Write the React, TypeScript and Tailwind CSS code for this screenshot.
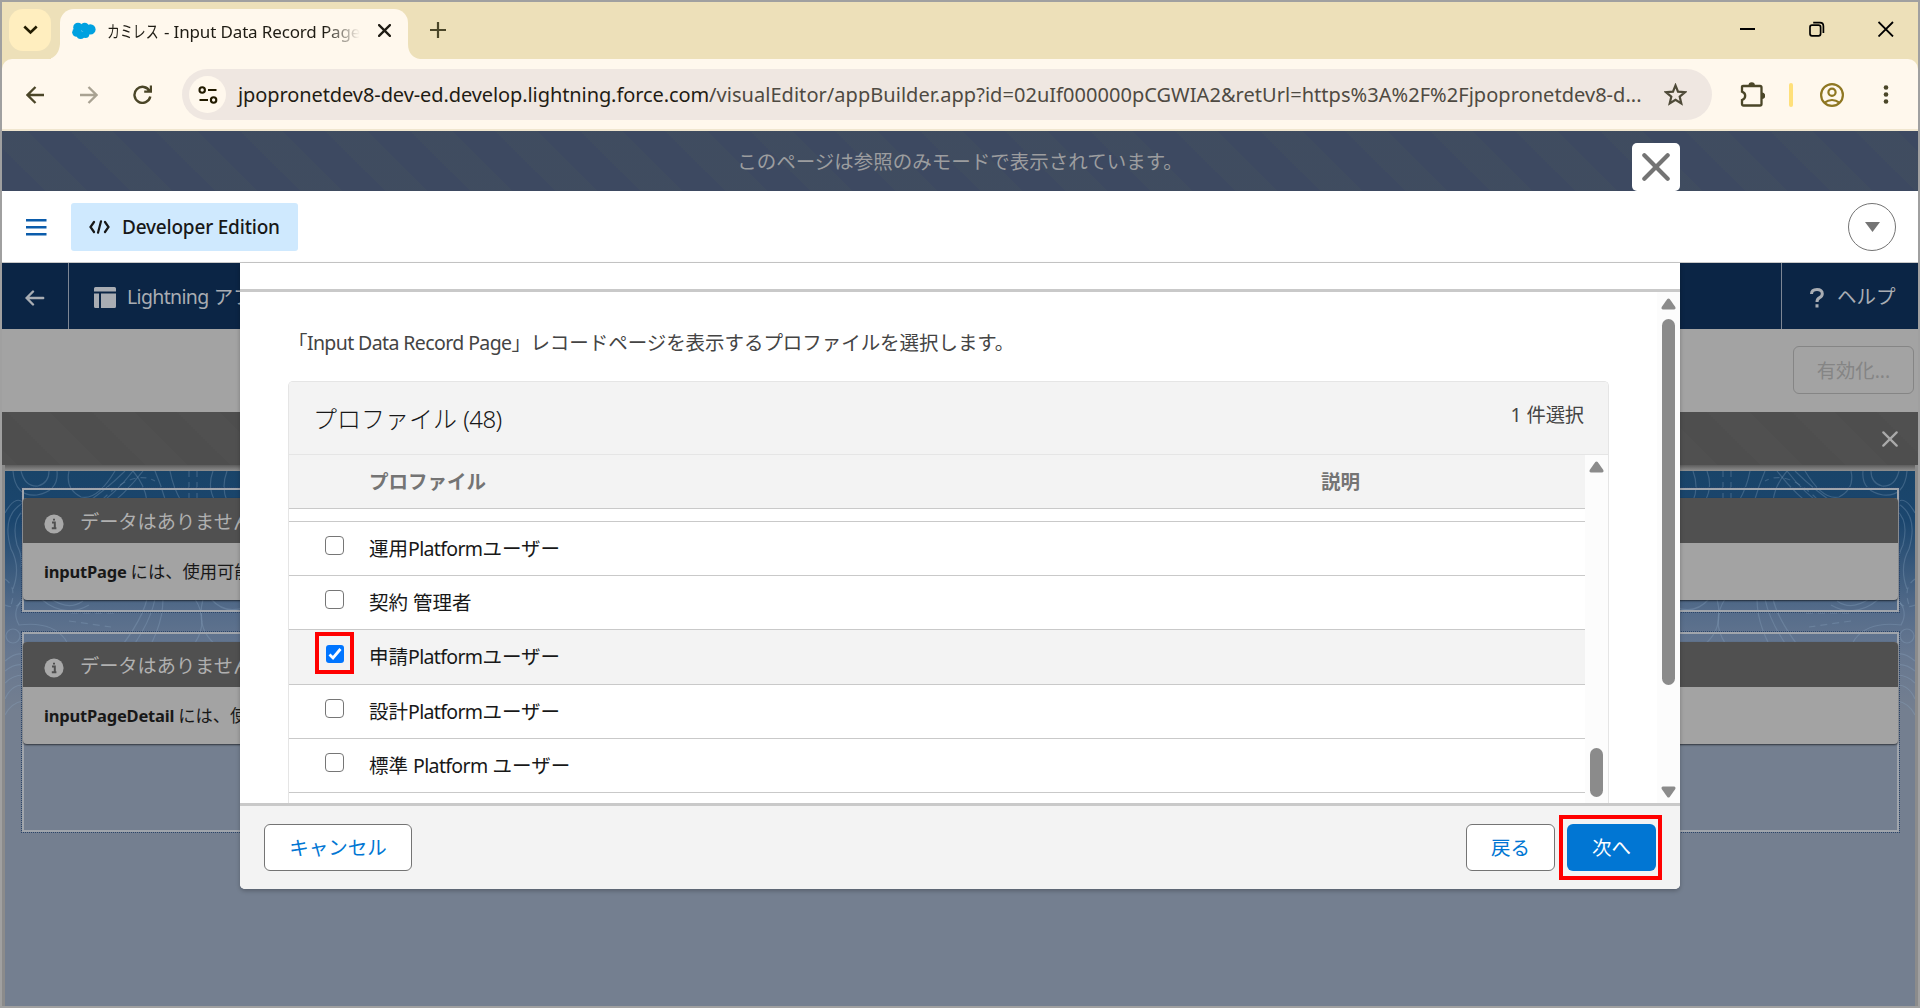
import { useState } from 'react';

interface Profile {
  id: string;
  name: string;
}

const PROFILES: Profile[] = [
  { id: 'operation', name: '運用Platformユーザー' },
  { id: 'contract', name: '契約 管理者' },
  { id: 'request', name: '申請Platformユーザー' },
  { id: 'design', name: '設計Platformユーザー' },
  { id: 'standard', name: '標準 Platform ユーザー' },
];

// Latin runs sit a little tighter than the Japanese around them
function MixedText({ text }: { text: string }) {
  return (
    <>
      {text.split(/([A-Za-z]+)/).map((part, index) =>
        /[A-Za-z]/.test(part) ? (
          <span key={index} className="tracking-[-0.65px]">
            {part}
          </span>
        ) : (
          part
        )
      )}
    </>
  );
}

function CloseGlyph({ className, width }: { className: string; width: number }) {
  return (
    <svg className={className} viewBox="0 0 24 24" fill="none" stroke="currentColor" strokeWidth={width} strokeLinecap="round">
      <path d="M2 2 22 22M22 2 2 22" />
    </svg>
  );
}

function TabStrip() {
  return (
    <div className="flex h-[57px] bg-[#ede0b9] pl-[7px]">
      <button className="mt-[7px] flex h-[42px] w-[42px] items-center justify-center rounded-[14px] bg-[#ffeebf]">
        <svg className="h-[10px] w-[15px]" viewBox="0 0 15 10" fill="none" stroke="#221b00" strokeWidth="2.6">
          <path d="M1.3 1.5 7.5 7.5 13.7 1.5" />
        </svg>
      </button>
      <svg className="mt-[42px] h-[15px] w-[9px] shrink-0" viewBox="0 0 9 15" fill="#fff8ed">
        <path d="M9 0V15H-5C3 15 8 10 9 0Z" />
      </svg>
      <div className="mt-[7px] flex h-[50px] w-[348px] items-center rounded-t-[14px] bg-[#fff8ed] pl-[12px] pb-[7px]">
        <svg className="h-[18px] w-[24px]" viewBox="0 0 24 18" fill="#00a1e0">
          <circle cx="6" cy="5.5" r="4.8" />
          <circle cx="12.7" cy="5.2" r="4.4" />
          <circle cx="18.4" cy="7.4" r="5.2" />
          <circle cx="4.6" cy="10.3" r="4.4" />
          <circle cx="8.6" cy="13" r="4" />
          <circle cx="13.5" cy="12.3" r="3.8" />
        </svg>
        <div className="ml-[11px] flex h-[30px] w-[253px] items-center overflow-hidden whitespace-nowrap pt-[2px] text-[17px] text-[#1f1c14] [mask-image:linear-gradient(90deg,#000_86%,transparent)]">
          <span className="w-[57px] origin-left scale-x-[0.76]">カミレス</span>
          <span className="tracking-[-0.15px]">- Input Data Record Page</span>
        </div>
        <CloseGlyph className="ml-[18px] h-[13px] w-[13px] text-[#1f1c14]" width={4.2} />
      </div>
      <svg className="mt-[42px] h-[15px] w-[12px] shrink-0" viewBox="0 0 12 15" fill="#fff8ed">
        <path d="M0 0V15H12C5 14 0 9 0 0Z" />
      </svg>
      <svg className="ml-[10px] mt-[20px] h-[16px] w-[16px]" viewBox="0 0 16 16" stroke="#4b4628" strokeWidth="2.2">
        <path d="M8 0V16M0 8H16" />
      </svg>
      <div className="mr-[24px] mt-[19px] ml-auto flex gap-[53px]">
        <svg className="h-[16px] w-[16px]" viewBox="0 0 16 16" stroke="#000" strokeWidth="2">
          <path d="M0 8H15" />
        </svg>
        <svg className="h-[16px] w-[16px]" viewBox="0 0 16 16" fill="none" stroke="#000" strokeWidth="1.7">
          <rect x="1" y="4.2" width="10.6" height="10.6" rx="2" />
          <path d="M4.2 1.7H11Q14.4 1.7 14.4 5.3V12" />
        </svg>
        <svg className="h-[16px] w-[16px]" viewBox="0 0 16 16" stroke="#000" strokeWidth="1.8">
          <path d="M0.5 1 15 15.5M15 1 0.5 15.5" />
        </svg>
      </div>
    </div>
  );
}

function AddressBar() {
  return (
    <div className="bg-[#ede0b9]">
      <div className="flex h-[72px] items-start rounded-t-[10px] border-b-2 border-[#f0e6cf] bg-[#fff8ed] pt-[10px]">
        <div className="flex h-[51px] w-[180px] items-center pl-[24px] text-[#4b4628]">
          <svg className="h-[18px] w-[18px]" viewBox="0 0 18 18" fill="none" stroke="currentColor" strokeWidth="2.3">
            <path d="M18 9H1.8M9.5 1 1.5 9 9.5 17" />
          </svg>
          <svg className="ml-[36px] h-[18px] w-[18px]" viewBox="0 0 18 18" fill="none" stroke="#a9a292" strokeWidth="2.3">
            <path d="M0 9H16.2M8.5 1 16.5 9 8.5 17" />
          </svg>
          <svg className="ml-[35px] h-[19px] w-[19px]" viewBox="0 0 19 19" fill="none" stroke="currentColor" strokeWidth="2.4">
            <path d="M16.6 6.2A8 8 0 1 0 17.3 11.5M18 0.5V6.6H11.2" />
          </svg>
        </div>
        <div className="flex h-[51px] w-[1530px] items-center rounded-full bg-[#efe7e1] pl-[7px]">
          <div className="flex h-[37px] w-[37px] items-center justify-center rounded-full bg-[#fff8ed]">
            <svg className="h-[18px] w-[20px]" viewBox="0 0 20 18" fill="none" stroke="#221b00" strokeWidth="2.1">
              <circle cx="4.2" cy="4" r="2.7" />
              <path d="M10 4H18.5M1.5 14H10" />
              <circle cx="15.6" cy="14" r="2.7" />
            </svg>
          </div>
          <div className="ml-[12px] w-[1410px] whitespace-nowrap text-[20px] text-[#1f1c14]">
            <span className="tracking-[-0.09px]">jpopronetdev8-dev-ed.develop.lightning.force.com</span>
            <span className="tracking-[0.04px] text-[#4e4a42]">
              /visualEditor/appBuilder.app?id=02uIf000000pCGWIA2&amp;retUrl=https%3A%2F%2Fjpopronetdev8-d...
            </span>
          </div>
          <svg className="ml-[16px] h-[23px] w-[23px]" viewBox="0 0 23 23" fill="none" stroke="#4e4a38" strokeWidth="2.2">
            <path d="M11.5 2.4 14 8.6 21 9.2 15.7 13.7 17.3 20.5 11.5 16.9 5.7 20.5 7.3 13.7 2 9.2 9 8.6Z" />
          </svg>
        </div>
        <div className="flex h-[51px] flex-1 items-center">
          <svg className="ml-[28px] h-[25px] w-[25px]" viewBox="0 0 25 25" fill="none" stroke="#4b4628" strokeWidth="2.3">
            <path d="M2 4.5Q2 4 3 4H20Q21.5 4 21.5 5.5V22Q21.5 23.5 20 23.5H3.5Q2 23.5 2 22V18Q5.2 16.8 5.2 13.8Q5.2 10.8 2 9.6Z" />
            <path d="M8.5 3.5A3.2 3.2 0 0 1 14.9 3.5ZM22 10.6A3.2 3.2 0 0 1 22 17Z" fill="#4b4628" strokeWidth="0" />
          </svg>
          <div className="ml-[24px] h-[24px] w-[4px] rounded-full bg-[#ffe07a]" />
          <svg className="ml-[27px] h-[24px] w-[24px]" viewBox="0 0 24 24" fill="none" stroke="#8f7722" strokeWidth="2.2">
            <circle cx="12" cy="12" r="10.9" />
            <circle cx="12" cy="9.3" r="3.6" />
            <path d="M4.2 19.8Q12 14.2 19.8 19.8" />
          </svg>
          <svg className="ml-[39px] h-[19px] w-[6px]" viewBox="0 0 6 19" fill="#4b4628">
            <circle cx="3" cy="2.5" r="2.3" />
            <circle cx="3" cy="9.5" r="2.3" />
            <circle cx="3" cy="16.5" r="2.3" />
          </svg>
        </div>
      </div>
    </div>
  );
}

function EditionBar() {
  return (
    <div className="flex h-[72px] items-center border-b border-[#c9c9c9] bg-white pl-[24px] pr-[22px]">
      <svg className="h-[18px] w-[21px]" viewBox="0 0 21 18" stroke="#0b5cab" strokeWidth="2.6">
        <path d="M0 2.3H20.5M0 9.2H20.5M0 16.2H20.5" />
      </svg>
      <div className="ml-[24px] flex h-[48px] w-[227px] items-center rounded-[3px] bg-[#cfe9fe] pl-[18px]">
        <svg className="h-[14px] w-[21px]" viewBox="0 0 21 14" fill="none" stroke="#181818" strokeWidth="2.2" strokeLinecap="round">
          <path d="M5 2 1.5 7 5 12M16 2 19.5 7 16 12M12 1.3 9 12.7" />
        </svg>
        <span className="ml-[12px] whitespace-nowrap pt-[2px] text-[19px] font-medium tracking-[-0.2px] text-[#181818]">Developer Edition</span>
      </div>
      <div className="ml-auto flex h-[48px] w-[48px] items-center justify-center rounded-full border border-[#747474]">
        <svg className="h-[10px] w-[15px]" viewBox="0 0 15 10" fill="#747474">
          <path d="M0 0H15L7.5 10Z" />
        </svg>
      </div>
    </div>
  );
}

function BuilderNav() {
  return (
    <div className="flex h-[66px] items-center bg-[#0b2545] text-[#a9adb3]">
      <div className="flex h-full w-[67px] items-center border-r border-[#7d8694] pl-[23px] pt-[4px]">
        <svg className="h-[16px] w-[20px]" viewBox="0 0 20 16" fill="none" stroke="currentColor" strokeWidth="2.4" strokeLinecap="round">
          <path d="M18.2 8H2M8 1.5 1.6 8 8 14.5" />
        </svg>
      </div>
      <svg className="ml-[25px] mt-[3px] h-[21px] w-[22px]" viewBox="0 0 22 21" fill="#a9adb3">
        <path d="M1.5 0H20.5Q22 0 22 1.5V4.5H0V1.5Q0 0 1.5 0ZM0 6.5H5V21H1.5Q0 21 0 19.5ZM7 6.5H22V19.5Q22 21 20.5 21H7Z" />
      </svg>
      <span className="ml-[11px] whitespace-nowrap pt-[2px] text-[19.5px]">
        <MixedText text="Lightning アプ" />
      </span>
      <div className="ml-auto flex h-full w-[137px] items-center border-l border-[#7d8694] pl-[28px]">
        <svg className="mt-[4px] h-[20px] w-[14px]" viewBox="0 0 14 20" fill="none" stroke="currentColor" strokeWidth="3">
          <path d="M1.5 6Q1.5 1.5 7 1.5Q12.3 1.5 12.3 5.8Q12.3 8.3 9.6 9.7Q7 11 7 14M7 16.3V19.6" />
        </svg>
        <span className="ml-[13px] pt-[2px] text-[19.5px]">ヘルプ</span>
      </div>
    </div>
  );
}

// Contour lines drawn behind the canvas, mirrored to fill both edges
function Contours({ className }: { className: string }) {
  return (
    <svg className={className} viewBox="0 0 240 250" fill="none" stroke="#8fa9c4" strokeOpacity="0.3" strokeWidth="1.2">
      <path d="M8 0Q10 26 32 24Q54 20 52 0M16 0Q20 16 33 15Q44 12 44 0" />
      <path d="M64 0Q60 18 76 26Q92 30 110 0M70 40Q100 20 120 0M82 42Q110 24 128 0M94 42Q118 26 138 0" />
      <path d="M128 0Q140 14 142 30M150 0Q156 14 160 28M165 0Q168 16 176 30M208 0Q202 16 210 30M222 0Q216 16 222 30" />
      <path d="M98 28Q128 -2 150 10" strokeDasharray="6 5" />
      <path d="M184 0V34M192 0V34" strokeDasharray="6 5" />
      <path d="M0 42Q12 20 22 36M18 32Q-4 44 6 78Q16 96 8 118M18 40Q6 50 12 74Q18 86 16 96" />
      <path d="M0 108Q12 116 6 134M0 134Q14 140 18 126" strokeDasharray="6 5" />
      <path d="M18 128Q6 140 14 154Q46 150 60 168Q72 190 82 200M36 128Q60 148 84 134M46 128Q64 140 78 130" />
      <path d="M150 128Q144 158 112 196M142 128Q136 154 100 196M158 128Q158 160 132 196M190 128Q204 150 190 172" />
      <path d="M206 128Q220 144 240 136M198 128Q190 160 214 176L240 172" />
      <path d="M64 150 106 156M70 162H100M66 142H110" strokeDasharray="7 5" />
      <circle cx="8" cy="165" r="7" />
      <path d="M0 190Q12 180 18 184M0 200Q10 192 18 194M0 212Q8 204 18 204M0 228Q6 214 18 214M0 244Q6 232 18 230" />
    </svg>
  );
}

function MissingComponent({ name, message }: { name: string; message: string }) {
  return (
    <div className="-mx-px overflow-hidden rounded-[4px] bg-[#a3a3a3] shadow-[0_1px_2px_rgba(0,0,0,0.6)]">
      <div className="flex h-[45px] items-center bg-[#505050] pl-[21px] text-[#b0b0b0]">
        <svg className="mt-[6px] h-[20px] w-[20px]" viewBox="0 0 20 20">
          <circle cx="10" cy="10" r="9.6" fill="#a9a9a9" />
          <path d="M8 8.5H10.8V14M7.8 14.2H12.4M10 4.8V6.6" stroke="#505050" strokeWidth="2" fill="none" />
        </svg>
        <span className="ml-[16px] mt-[3px] whitespace-nowrap text-[19.2px]">データはありません</span>
      </div>
      <div className="h-[57px] whitespace-nowrap pl-[21px] pt-[16px] text-[17.3px] leading-[26px] text-[#181818]">
        <b className="text-[16.5px] tracking-[-0.2px]">{name}</b>
        <span className="ml-[4px]">{message}</span>
      </div>
    </div>
  );
}

function Canvas() {
  return (
    <div className="relative flex-1 bg-[#8b8b8b] px-[3px]">
      <div className="h-[6px] bg-[linear-gradient(#5d5d5d,#8f8f8f)]" />
      <div className="flex h-[535px] flex-col bg-[linear-gradient(#194469_0px,#1b466e_50px,#556c8a_140px,#667790_180px,#747f90_240px)] pl-[17px] pr-[16px] pt-[17px]">
        <Contours className="absolute left-[3px] top-[6px] h-[250px] w-[240px]" />
        <Contours className="absolute right-[3px] top-[6px] h-[250px] w-[240px] -scale-x-100" />
        <div className="relative h-[124px] border-2 border-[#a0a5ac] pt-[8px] outline outline-dotted outline-1 outline-[#2b4468]">
          <MissingComponent name="inputPage" message="には、使用可能" />
        </div>
        <div className="relative mt-[20px] h-[200px] border-2 border-[#a0a5ac] pt-[8px] outline outline-dotted outline-1 outline-[#2b4468]">
          <MissingComponent name="inputPageDetail" message="には、使" />
        </div>
      </div>
    </div>
  );
}

function Arrow({ down }: { down?: boolean }) {
  return (
    <svg className={down ? 'h-[12px] w-[15px] rotate-180' : 'h-[12px] w-[15px]'} viewBox="0 0 15 12" fill="#8b8b8b">
      <path d="M6.3 1Q7.5 0 8.7 1L14.3 9Q15 11.5 13 11.5H2Q0 11.5 0.7 9Z" />
    </svg>
  );
}

export default function App() {
  const [selected, setSelected] = useState<string[]>(['request']);

  const toggle = (id: string) => {
    setSelected((prev) => (prev.includes(id) ? prev.filter((p) => p !== id) : [...prev, id]));
  };

  return (
    <div className="relative flex h-[1008px] w-[1920px] flex-col overflow-hidden border-2 border-[#a0a0a0] font-['Noto_Sans','Noto_Sans_CJK_JP',sans-serif]">
      <TabStrip />
      <AddressBar />
      <div className="flex h-[60px] shrink-0 items-center justify-center bg-[#3d4961] bg-[linear-gradient(45deg,rgba(110,120,80,0.06)_25%,transparent_25%,transparent_50%,rgba(110,120,80,0.06)_50%,rgba(110,120,80,0.06)_75%,transparent_75%)] bg-[length:85px_85px] bg-[position:-17px_0px] pt-[2px] text-[19.5px] text-[#9c9d9f]">
        このページは参照のみモードで表示されています。
      </div>
      <EditionBar />
      <BuilderNav />
      <div className="flex h-[83px] shrink-0 justify-end bg-[#a3a3a3] pr-[4px] pt-[17px]">
        <button className="h-[48px] w-[121px] rounded-[6px] border border-[#858585] pt-[2px] text-[19.3px] text-[#858585]">有効化...</button>
      </div>
      <div className="flex h-[53px] shrink-0 items-center justify-end bg-[#4e4e4e] bg-[linear-gradient(45deg,rgba(255,255,255,0.012)_25%,transparent_25%,transparent_50%,rgba(255,255,255,0.012)_50%,rgba(255,255,255,0.012)_75%,transparent_75%)] bg-[length:85px_85px] bg-[position:5px_0px] pr-[20px]">
        <CloseGlyph className="h-[16px] w-[16px] text-[#a9a9a9]" width={3.4} />
      </div>
      <Canvas />

      {/* Modal */}
      <button className="absolute left-[1630px] top-[141px] flex h-[48px] w-[48px] items-center justify-center rounded-[5px] bg-white">
        <CloseGlyph className="h-[28px] w-[28px] text-[#747474]" width={3.6} />
      </button>
      <div className="absolute left-[238px] top-[261px] flex h-[626px] w-[1440px] flex-col overflow-hidden rounded-b-[5px] bg-white shadow-[0_2px_4px_rgba(0,0,0,0.25)]">
        <div className="h-[29px] shrink-0 border-b-[3px] border-[#c9c9c9]" />
        <div className="flex h-[511px] shrink-0">
          <div className="flex-1 pl-[48px]">
            <p className="mt-[37px] h-[28px] whitespace-nowrap text-[19.5px] leading-[28px] text-[#444444]">
              <span className="tracking-[-0.6px]">「Input Data Record Page」</span>
              <span className="tracking-[-0.05px]">レコードページを表示するプロファイルを選択します。</span>
            </p>
            <div className="mt-[24px] flex h-[422px] w-[1321px] flex-col rounded-t-[5px] border border-b-0 border-[#e5e5e5]">
              <div className="flex h-[73px] shrink-0 items-start justify-between rounded-t-[4px] border-b border-[#e5e5e5] bg-[#f3f3f3] pl-[24px] pr-[24px]">
                <h2 className="mt-[18px] text-[24px] font-light leading-[38px] text-[#181818]">
                  プロファイル <span className="tracking-[-0.6px]">(48)</span>
                </h2>
                <span className="mt-[19px] text-[19.3px] leading-[28px] tracking-[-0.1px] text-[#444444]">1 件選択</span>
              </div>
              <div className="flex flex-1">
                <div className="w-[1296px]">
                  <div className="flex h-[54px] items-center border-b border-[#c9c9c9] bg-[#f3f3f3] pl-[80px] text-[19.5px] font-bold text-[#747474]">
                    <span className="w-[952px]">プロファイル</span>
                    <span>説明</span>
                  </div>
                  <div className="h-[13px] border-b border-[#c9c9c9]" />
                  {PROFILES.map((profile) => {
                    const checked = selected.includes(profile.id);
                    return (
                      <label
                        key={profile.id}
                        className={`flex h-[54.2px] items-start border-b border-[#c9c9c9] pl-[36px] text-[19.5px] text-[#181818] ${checked ? 'bg-[#f3f3f3]' : 'bg-white'}`}
                      >
                        <input type="checkbox" className="sr-only" checked={checked} onChange={() => toggle(profile.id)} />
                        <span className="mt-[14px] flex h-[19px] w-[20px] items-center">
                          {checked ? (
                            <svg className="ml-[1px] h-[18px] w-[18px]" viewBox="0 0 18 18" fill="none">
                              <rect width="18" height="18" rx="3" fill="#0075ff" />
                              <path d="M3.5 9.5 7 13 14.5 4" stroke="#fff" strokeWidth="2.8" />
                            </svg>
                          ) : (
                            <span className="h-[19px] w-[19px] rounded-[4px] border border-[#767676] bg-white" />
                          )}
                        </span>
                        <span className="ml-[24px] mt-[13px] leading-[28px]">
                          <MixedText text={profile.name} />
                        </span>
                      </label>
                    );
                  })}
                </div>
                <div className="flex flex-1 flex-col items-center bg-[#fcfcfc] pt-[6px]">
                  <Arrow />
                  <div className="mt-[275px] h-[49px] w-[13px] rounded-full bg-[#8b8b8b]" />
                </div>
              </div>
            </div>
          </div>
          <div className="flex w-[23px] flex-col items-center bg-[#fcfcfc] pt-[6px]">
            <Arrow />
            <div className="mt-[9px] h-[366px] w-[13px] rounded-full bg-[#8b8b8b]" />
            <div className="mt-[101px]">
              <Arrow down />
            </div>
          </div>
        </div>
        <div className="flex flex-1 items-start border-t-[3px] border-[#c9c9c9] bg-[#f3f3f3] pl-[24px] pr-[24px] pt-[18px] text-[19.5px] text-[#0176d3]">
          <button className="h-[47px] w-[148px] rounded-[6px] border border-[#747474] bg-white">キャンセル</button>
          <button className="ml-auto h-[47px] w-[89px] rounded-[6px] border border-[#747474] bg-white">戻る</button>
          <button className="ml-[12px] h-[47px] w-[89px] rounded-[6px] bg-[#0176d3] text-white">次へ</button>
        </div>
      </div>

      {/* Callout frames */}
      <div className="pointer-events-none absolute left-[313px] top-[630px] h-[42px] w-[39px] border-4 border-[#ff0000]" />
      <div className="pointer-events-none absolute left-[1557px] top-[813px] h-[65px] w-[103px] border-4 border-[#ff0000]" />
    </div>
  );
}
